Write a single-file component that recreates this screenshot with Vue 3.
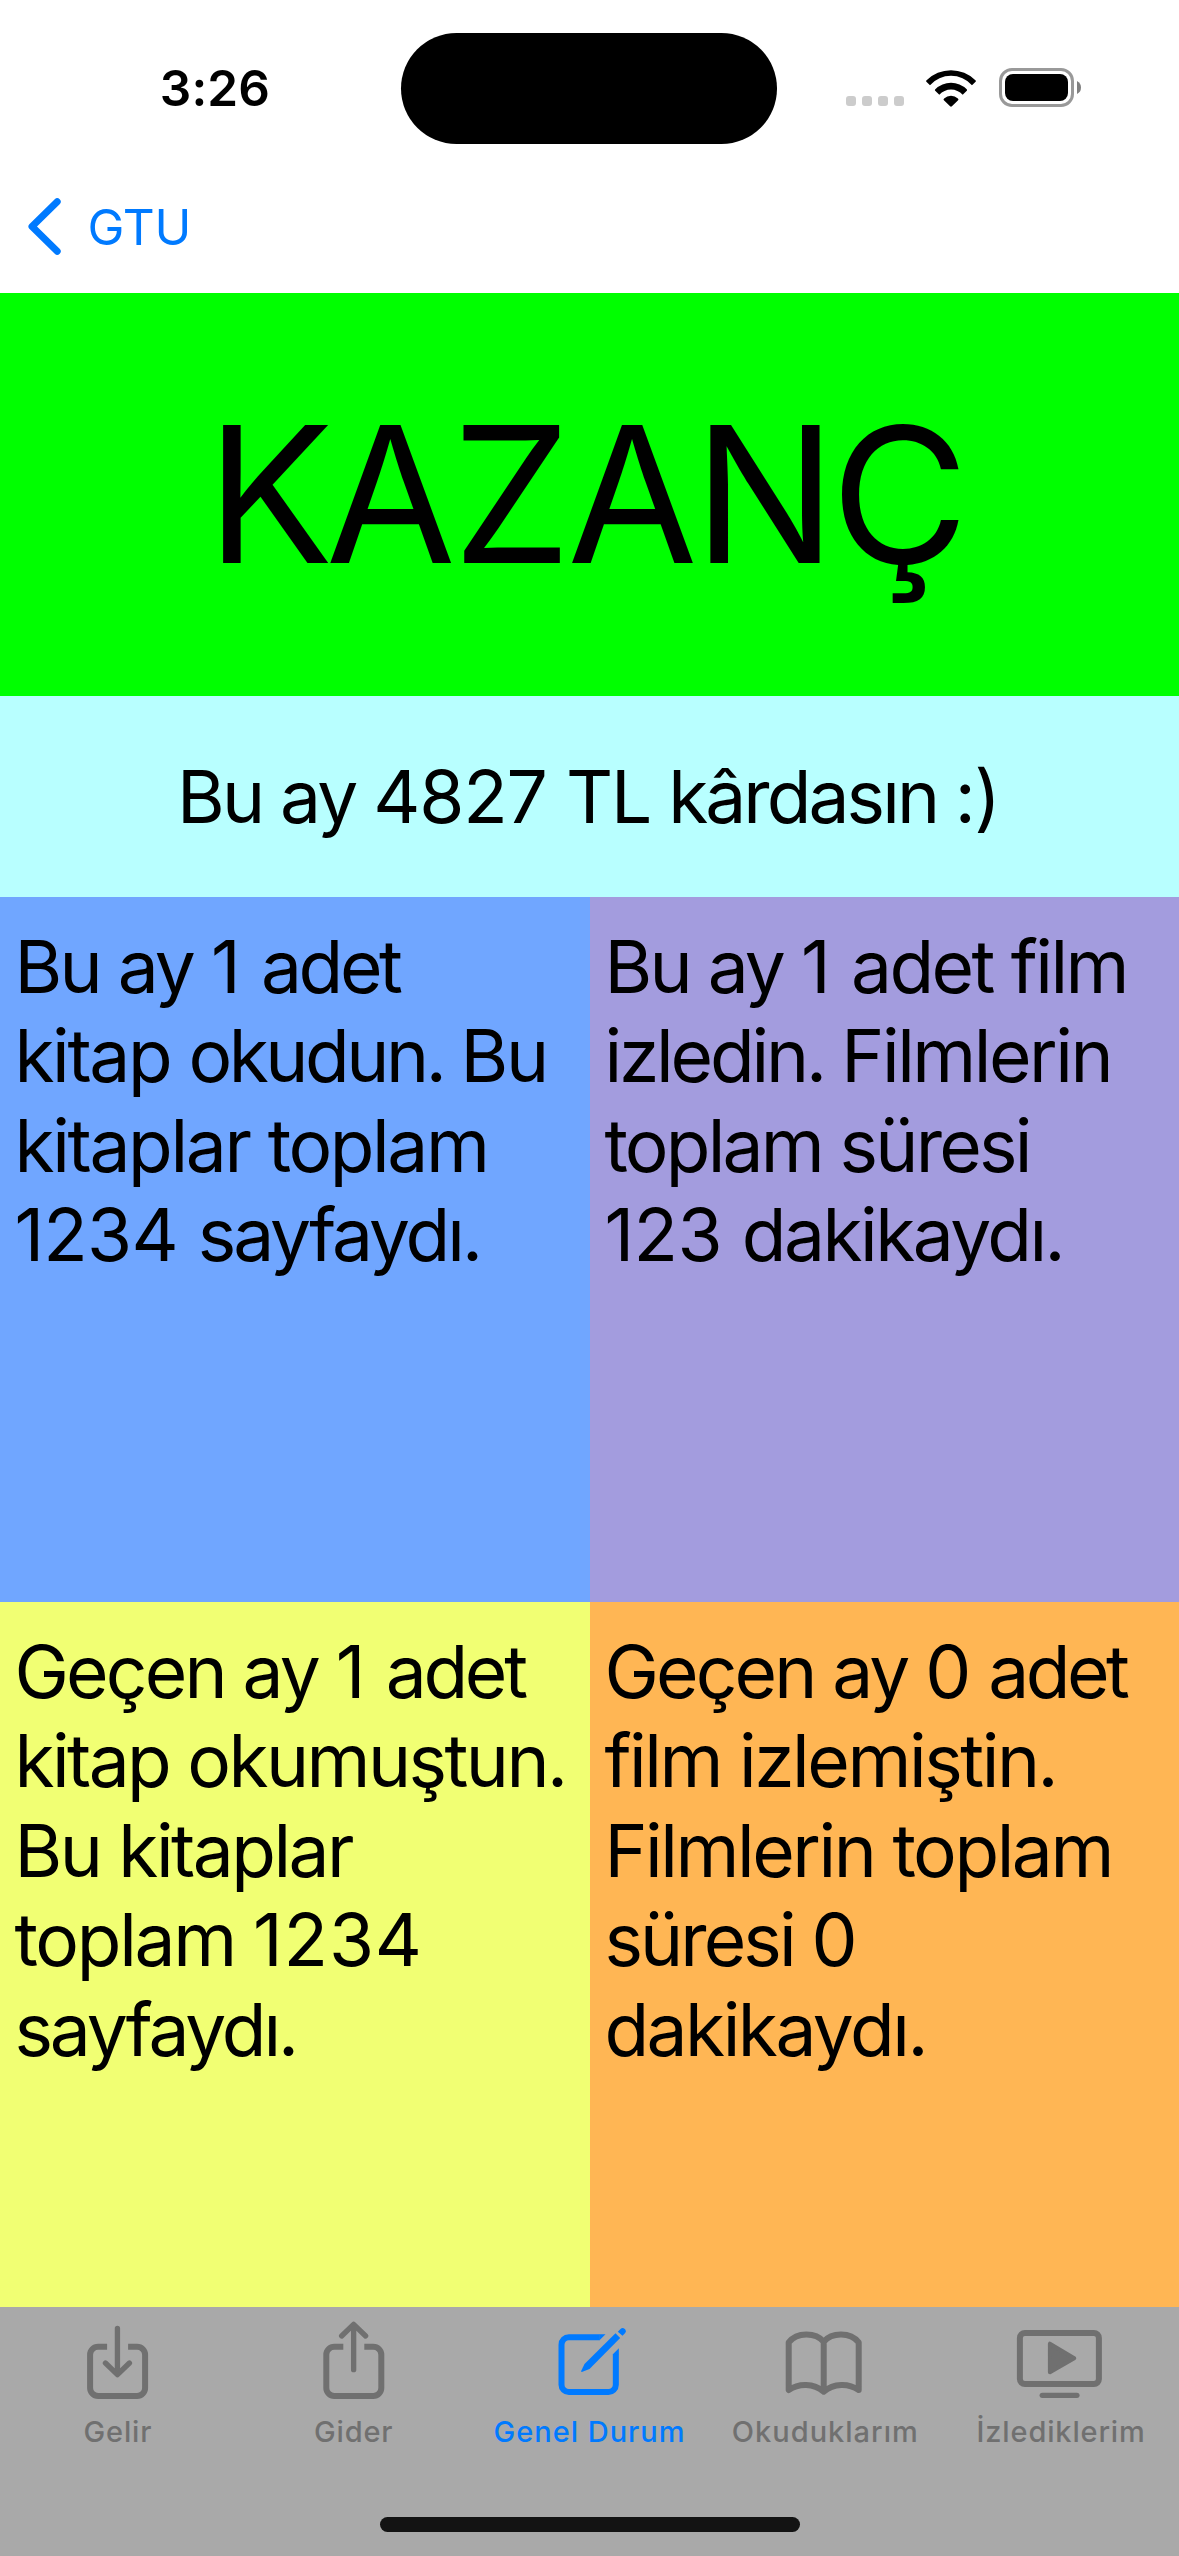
<script setup>
// Each line is a list of [text, letter-spacing] runs.
const cards = [
  {
    tone: 'blue',
    lines: [
      [['Bu ay ', -2.74], ['1 ', -0.09], ['adet', -3.38]],
      [['kitap ', -2.37], ['okudun. ', -3.44], ['Bu', -2.25]],
      [['kitaplar ', -2.33], ['toplam', -2.44]],
      [['1234 ', -0.75], ['sayfaydı.', -3]],
    ],
  },
  {
    tone: 'purple',
    lines: [
      [['Bu ay ', -2.74], ['1 ', -0.09], ['adet film', -2.56]],
      [['izledin. ', -3.15], ['Filmlerin', -2.48]],
      [['toplam süresi', -2.8]],
      [['123 ', -0.6], ['dakikaydı.', -2.52]],
    ],
  },
  {
    tone: 'yellow',
    lines: [
      [['Geçen ay ', -2.8], ['1 ', -0.09], ['adet', -3.26]],
      [['kitap okumuştun.', -2.56]],
      [['Bu kitaplar', -2.51]],
      [['toplam ', -2.3], ['1234', 0.83]],
      [['sayfaydı.', -3.08]],
    ],
  },
  {
    tone: 'orange',
    lines: [
      [['Geçen ay ', -2.85], ['0 ', -1.75], ['adet', -3.51]],
      [['film izlemiştin.', -2.45]],
      [['Filmlerin toplam', -2.46]],
      [['süresi ', -2.9], ['0', 0]],
      [['dakikaydı.', -2.49]],
    ],
  },
]

const title = [['K', -7.77], ['AZA', -3.81], ['N', -5.6], ['Ç', 0]]
const summary = [['Bu ay ', -2.82], ['4827 ', -1.15], ['TL ', -2.28], ['kârdasın ', -2.92], [':)', -1.56]]
</script>

<template>
  <div class="screen">
    <header class="status">
      <span class="time">3:26</span>
      <div class="island"></div>
      <div class="signals">
        <div class="dots"><i></i><i></i><i></i><i></i></div>
        <svg class="wifi" viewBox="0 0 52 38" width="52" height="38">
          <path d="M1.6 11.2A34.6 34.6 0 0 1 50.4 11.2Q51.4 12 50.6 12.800L47 16.200A28.300 28.300 0 0 0 5 16.200L1.4 12.800Q0.600 12 1.600 11.200Z" />
          <path d="M10.300 20.200A22.400 22.400 0 0 1 41.700 20.200Q42.600 21 41.800 21.800L37.700 25.700A16 16 0 0 0 14.300 25.700L10.200 21.800Q9.400 21 10.300 20.200Z" />
          <path d="M19.100 29.400A10.500 10.500 0 0 1 32.900 29.400Q34 30.300 33.100 31.200L26.900 37.300Q26 38 25.100 37.300L18.900 31.200Q18 30.300 19.100 29.400Z" />
        </svg>
        <svg class="battery" viewBox="0 0 84 40" width="84" height="40">
          <rect x="2.5" y="2.5" width="72" height="36" rx="11.5" fill="none" stroke="#999" stroke-width="3" />
          <rect x="7" y="7" width="63" height="27" rx="8" />
          <path d="M79 14Q83 16 83 20.500T79 27Z" fill="#808080" />
        </svg>
      </div>
    </header>

    <nav class="nav">
      <svg class="chevron" viewBox="0 0 40 64" width="40" height="64">
        <path d="M31.2 6.8L6 31.5L31.2 56.2" fill="none" stroke="currentColor" stroke-width="7" stroke-linecap="round" stroke-linejoin="round" />
      </svg>
      <span class="back">GTU</span>
    </nav>

    <h1 class="title"><span v-for="[text, tracking] in title" :key="text" :style="{ letterSpacing: tracking + 'px' }">{{ text }}</span></h1>
    <p class="summary"><span v-for="[text, tracking] in summary" :key="text" :style="{ letterSpacing: tracking + 'px' }">{{ text }}</span></p>

    <main class="cards">
      <section v-for="card in cards" :key="card.tone" class="card" :class="card.tone">
        <p v-for="(runs, i) in card.lines" :key="i" class="line"><span v-for="[text, tracking] in runs" :key="text" :style="{ letterSpacing: tracking + 'px' }">{{ text }}</span></p>
      </section>
    </main>

    <footer class="tabs">
      <div class="tab">
        <svg viewBox="173.7 60 360 276" width="120" height="92">
          <g class="stroke">
            <path d="M321 170H294a24 24 0 0 0-24 24V294a24 24 0 0 0 24 24H411a24 24 0 0 0 24-24V194a24 24 0 0 0-24-24H384" />
            <path class="round" d="M352 115V252M316 219L352 254L388 219" />
          </g>
        </svg>
        <span>Gelir</span>
      </div>
      <div class="tab">
        <svg viewBox="881.1 60 360 276" width="120" height="92">
          <g class="stroke">
            <path d="M1029 170H1002a24 24 0 0 0-24 24V294a24 24 0 0 0 24 24H1119a24 24 0 0 0 24-24V194a24 24 0 0 0-24-24H1092" />
            <path class="round" d="M1060 239V105M1024 138L1060 103L1096 138" />
          </g>
        </svg>
        <span>Gider</span>
      </div>
      <div class="tab active">
        <svg viewBox="388.5 60 360 276" width="120" height="92">
          <g class="stroke">
            <path d="M601 142H508a22 22 0 0 0-22 22V284a22 22 0 0 0 22 22H627a22 22 0 0 0 22-22V192" />
          </g>
          <path d="M600 133H618L600 151ZM640 193L658 175V193Z" />
          <path d="M648 130L662 144L570 237L547 246Q544 246 545 243L555 222Z" />
          <path d="M655 125L663 117Q669 111 675 116L677 118Q682 124 677 129L669 137Z" />
        </svg>
        <span class="wide">Genel Durum</span>
      </div>
      <div class="tab">
        <svg viewBox="-41.1 60 360 276" width="120" height="92">
          <g class="stroke">
            <path d="M30 300V157C55 126 110 126 135 155C160 126 215 126 240 157V300C210 279 165 279 135 305C105 279 60 279 30 300ZM135 155V305" />
          </g>
        </svg>
        <span class="wide">Okuduklarım</span>
      </div>
      <div class="tab">
        <svg viewBox="666.3 60 360 276" width="120" height="92">
          <g class="stroke">
            <rect x="723" y="129" width="237" height="153" rx="15" />
            <path class="round" d="M790 316H894" />
          </g>
          <path d="M813 161V247L886 205Z" stroke="currentColor" stroke-width="12" stroke-linejoin="round" />
        </svg>
        <span>İzlediklerim</span>
      </div>
      <div class="home"></div>
    </footer>
  </div>
</template>

<style scoped>
.screen {
  width: 1179px;
  height: 2556px;
  overflow: hidden;
  display: flex;
  flex-direction: column;
  background: #fff;
  color: #000;
  font-family: Inter, "Liberation Sans", sans-serif;
}
.status {
  height: 177px;
  flex: none;
  display: grid;
  grid-template-columns: 401px 376px 402px;
  align-items: start;
}
.time {
  padding: 58px 0 0 159.8px;
  font-size: 49.5px;
  font-weight: 600;
  line-height: 60px;
  letter-spacing: 0.13px;
}
.island {
  height: 111px;
  margin-top: 33px;
  border-radius: 56px;
  background: #000;
}
.signals {
  display: flex;
  align-items: flex-start;
  padding: 67px 0 0 69px;
}
.dots {
  display: flex;
  gap: 6px;
  padding-top: 29px;
}
.dots i {
  width: 10px;
  height: 10px;
  border-radius: 3px;
  background: #ccc;
}
.wifi {
  margin: 2px 0 0 21.4px;
}
.battery {
  margin-left: 20.6px;
}
.nav {
  height: 116px;
  flex: none;
  display: flex;
  align-items: flex-start;
  color: #007aff;
}
.chevron {
  margin: 18px 0 0 26px;
}
.back {
  margin: 20px 0 0 21.5px;
  font-size: 49.5px;
  line-height: 60px;
  letter-spacing: -0.25px;
}
.title {
  height: 403px;
  flex: none;
  box-sizing: border-box;
  margin: 0;
  padding-left: 206.4px;
  background: #0f0;
  font-size: 189px;
  font-weight: 400;
  line-height: 404px;
  white-space: pre;
}
.summary {
  height: 201px;
  flex: none;
  box-sizing: border-box;
  margin: 0;
  padding-left: 177.1px;
  background: #b8ffff;
  font-size: 73px;
  line-height: 201px;
  white-space: pre;
}
.cards {
  flex: none;
  display: grid;
  grid-template-columns: 590px 589px;
  grid-auto-rows: 705px;
}
.card {
  box-sizing: border-box;
  padding: 24.75px 0 0 14.4px;
}
.blue { background: #70a6ff; }
.purple { background: #a39cde; }
.yellow { background: #f1ff73; }
.orange { background: #ffb654; }
.line {
  margin: 0;
  font-size: 73px;
  line-height: 89.5px;
  white-space: pre;
}
.tabs {
  flex: 1;
  display: grid;
  grid-template-columns: repeat(5, 1fr);
  grid-template-rows: 210px 15px;
  background: #a9a9a9;
  color: #707070;
}
.tab {
  display: flex;
  flex-direction: column;
  align-items: center;
  padding-top: 3px;
}
.tab.active {
  color: #007aff;
}
.tab svg {
  fill: currentColor;
}
.tab svg .stroke {
  fill: none;
  stroke: currentColor;
  stroke-width: 18px;
  stroke-linejoin: round;
}
.tab svg .round {
  stroke-width: 16px;
  stroke-linecap: round;
}
.tab span {
  margin-top: 12px;
  font-size: 29px;
  font-weight: 500;
  line-height: 35px;
  letter-spacing: 0.85px;
}
.tab span.wide {
  letter-spacing: 1px;
}
.home {
  grid-column: 1 / -1;
  justify-self: center;
  width: 420px;
  border-radius: 8px;
  background: #131313;
}
</style>

<style>
body {
  margin: 0;
}
</style>
